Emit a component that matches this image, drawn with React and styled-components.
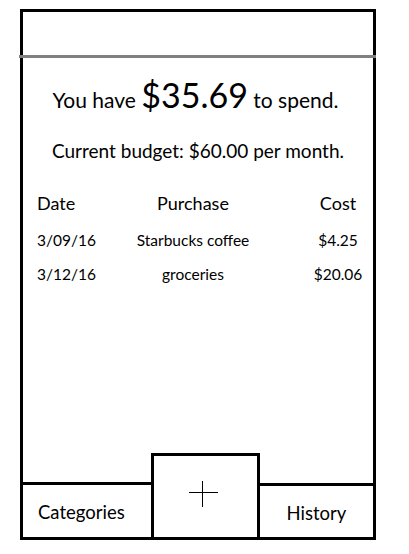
import styled, { createGlobalStyle } from "styled-components";

const purchases = [
  { date: "3/09/16", item: "Starbucks coffee", cost: "$4.25" },
  { date: "3/12/16", item: "groceries", cost: "$20.06" },
];

const App = () => {
  return (
    <>
      <GlobalStyle />
      <Phone>
        <TopBar />
        <Main>
          <Balance>
            You have <Amount>$35.69</Amount> to spend.
          </Balance>
          <Budget>Current budget: $60.00 per month.</Budget>
          <Table>
            <HeadCell>Date</HeadCell>
            <HeadCell $align="center">Purchase</HeadCell>
            <HeadCell $align="center" $end>
              Cost
            </HeadCell>
            {purchases.map((p) => (
              <Row key={p.date}>
                <Cell>{p.date}</Cell>
                <Cell $align="center">{p.item}</Cell>
                <Cell $align="center" $end>
                  {p.cost}
                </Cell>
              </Row>
            ))}
          </Table>
        </Main>
        <NavBar>
          <Tab $pad="15px">Categories</Tab>
          <AddButton type="button" aria-label="Add purchase">
            <svg width="29" height="26" viewBox="0 0 29 26">
              <path d="M0 11.5H29M13.5 0V26" stroke="#000" strokeWidth="1" fill="none" />
            </svg>
          </AddButton>
          <Tab $center>History</Tab>
        </NavBar>
      </Phone>
    </>
  );
};

export default App;

const GlobalStyle = createGlobalStyle`
  body {
    margin: 0;
    background: #fff;
    color: #000;
    font-family: Lato, "Liberation Sans", sans-serif;
  }
`;

const Phone = styled.div`
  display: flex;
  flex-direction: column;

  box-sizing: border-box;
  width: 356px;
  height: 531px;
  margin: 9px 0 0 20px;

  border: 3px solid #000;
`;

const TopBar = styled.header`
  height: 43px;
  margin: 0 -3px 0 -4px;

  border-bottom: 3px solid #808080;
`;

const Main = styled.main`
  flex: 1;
  display: flex;
  flex-direction: column;
  align-items: center;
  padding-top: 17px;
`;

const Balance = styled.p`
  margin: 0 0 0 -5px;
  font-size: 21px;
  line-height: 40px;
`;

const Amount = styled.span`
  font-size: 34px;
`;

const Budget = styled.p`
  margin: 19px 0 0;
  font-size: 19px;
  line-height: 24px;
`;

const Table = styled.div`
  display: grid;
  grid-template-columns: 90px 132px 1fr;
  align-self: stretch;
  padding-left: 14px;
  margin-top: 28px;
`;

const Row = styled.div`
  display: contents;
`;

const HeadCell = styled.div`
  font-size: 18px;
  line-height: 24px;
  margin-bottom: 8px;
  text-align: ${({ $align }) => $align || "left"};
  ${({ $end }) => $end && "justify-self: end; width: 70px;"}
`;

const Cell = styled.div`
  font-size: 15.5px;
  line-height: 34px;
  text-align: ${({ $align }) => $align || "left"};
  ${({ $end }) => $end && "justify-self: end; width: 70px;"}
`;

const NavBar = styled.nav`
  display: flex;
  align-items: flex-end;
  height: 84px;
`;

const Tab = styled.div`
  flex: ${({ $center }) => ($center ? "0 0 113px" : "0 0 128px")};
  display: flex;
  align-items: center;
  justify-content: ${({ $center }) => ($center ? "center" : "flex-start")};
  box-sizing: border-box;
  height: ${({ $center }) => ($center ? "54px" : "55px")};
  padding-left: ${({ $pad }) => $pad || "0"};
  padding-top: 2px;

  border-top: 3px solid #000;
  font-size: 18.5px;
`;

const AddButton = styled.button`
  flex: 0 0 109px;
  display: flex;
  align-items: center;
  justify-content: center;
  box-sizing: border-box;
  height: 84px;
  padding: 0 5px 6px 0;

  background: #fff;
  border: 3px solid #000;
  border-bottom: 0;
  cursor: pointer;
`;
